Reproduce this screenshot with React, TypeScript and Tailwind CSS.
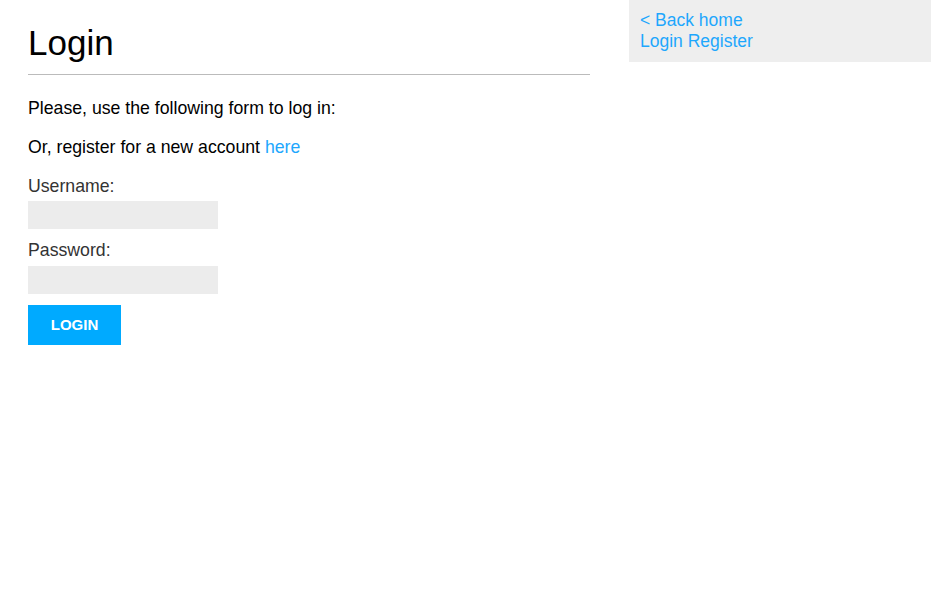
export default function App() {
  return (
    <div className="flex items-start bg-white min-h-[609px]" style={{ fontFamily: '"Liberation Sans", Arial, sans-serif' }}>
      <main className="ml-[28px] w-[562px] shrink-0">
        <h1 className="mt-[22px] text-[35px] leading-[41px] font-normal text-black">Login</h1>
        <hr className="mt-[11px] border-0 border-t border-[#bbbbbb]" />
        <p className="mt-[21px] text-[17.7px] leading-[24px] text-black">Please, use the following form to log in:</p>
        <p className="mt-[15px] text-[17.7px] leading-[24px] text-black">
          Or, register for a new account <a href="#" className="text-[#1ea7fd]">here</a>
        </p>
        <form className="flex flex-col items-start">
          <label className="mt-[15px] text-[17.7px] leading-[24px] text-[#333333]">Username:</label>
          <input type="text" className="mt-[3px] w-[190px] h-[28px] bg-[#ececec] border-0 outline-none px-2" />
          <label className="mt-[9px] text-[17.7px] leading-[24px] text-[#333333]">Password:</label>
          <input type="password" className="mt-[4px] w-[190px] h-[28px] bg-[#ececec] border-0 outline-none px-2" />
          <button type="button" className="mt-[11px] w-[93px] h-[40px] bg-[#00aaff] text-white text-[15px] font-bold flex items-center justify-center">
            LOGIN
          </button>
        </form>
      </main>
      <aside className="ml-[39px] w-[302px] shrink-0 bg-[#eeeeee] pt-[10px] pb-[10px] pl-[11px] text-[17.5px] leading-[21px] text-[#1ea7fd]">
        <div><a href="#">&lt; Back home</a></div>
        <div>
          <a href="#">Login</a> <a href="#">Register</a>
        </div>
      </aside>
    </div>
  );
}
